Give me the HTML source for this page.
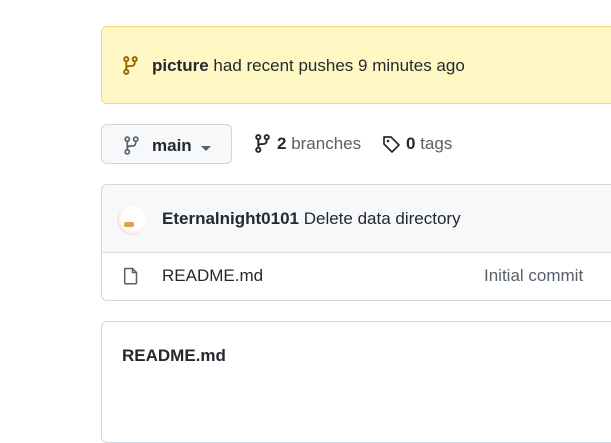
<!DOCTYPE html>
<html><head><style>
body{margin:0;width:611px;height:408px;overflow:hidden;background:#fff;font-family:"Liberation Sans",sans-serif;color:#24292f;font-size:17px;position:relative}
.abs{position:absolute}
svg{display:block}
</style></head><body>
<div class="abs" style="left:101px;top:26px;width:520px;height:76px;background:#fff8c5;border:1px solid #eed888;border-radius:6px;"></div>
<svg class="abs" style="left:122px;top:56px" width="17" height="19" viewBox="0 0 16 18"><g fill="none" stroke="#9a6700" stroke-width="1.8"><circle cx="4" cy="3" r="2"/><circle cx="4" cy="15" r="2"/><circle cx="12" cy="3" r="2"/><path d="M4 5v8M12 5v1.5a3 3 0 0 1-3 3H6.5a2.5 2.5 0 0 0-2.5 2.5"/></g></svg>
<div class="abs" style="left:152px;top:56px"><b>picture</b> had recent pushes 9 minutes ago</div>

<div class="abs" style="left:101px;top:124px;width:129px;height:38px;background:#f6f8fa;border:1px solid #d0d7de;border-radius:6px;"></div>
<svg class="abs" style="left:123px;top:136px" width="17" height="19" viewBox="0 0 16 18"><g fill="none" stroke="#57606a" stroke-width="1.6"><circle cx="4" cy="3" r="2"/><circle cx="4" cy="15" r="2"/><circle cx="12" cy="3" r="2"/><path d="M4 5v8M12 5v1.5a3 3 0 0 1-3 3H6.5a2.5 2.5 0 0 0-2.5 2.5"/></g></svg>
<div class="abs" style="left:152px;top:136px;font-weight:bold">main</div>
<div class="abs" style="left:201px;top:146px;width:0;height:0;border-left:5px solid transparent;border-right:5px solid transparent;border-top:5px solid #57606a"></div>

<svg class="abs" style="left:254px;top:134px" width="17" height="19" viewBox="0 0 16 18"><g fill="none" stroke="#24292f" stroke-width="1.8"><circle cx="4" cy="3" r="2"/><circle cx="4" cy="15" r="2"/><circle cx="12" cy="3" r="2"/><path d="M4 5v8M12 5v1.5a3 3 0 0 1-3 3H6.5a2.5 2.5 0 0 0-2.5 2.5"/></g></svg>
<div class="abs" style="left:277px;top:134px;color:#57606a"><b style="color:#24292f">2</b> branches</div>
<svg class="abs" style="left:382px;top:135px" width="19" height="19" viewBox="0 0 19 19"><path d="M2 2h7l8 8-7 7-8-8z" fill="none" stroke="#24292f" stroke-width="1.7" stroke-linejoin="round"/><circle cx="6" cy="6" r="1.3" fill="#24292f"/></svg>
<div class="abs" style="left:406px;top:134px;color:#57606a"><b style="color:#24292f">0</b> tags</div>

<div class="abs" style="left:101px;top:184px;width:520px;height:115px;border:1px solid #d0d7de;border-radius:6px;overflow:hidden">
 <div style="height:67px;background:#f6f8fa;border-bottom:1px solid #d8dee4"></div>
</div>
<div class="abs" style="left:117px;top:205px;width:30px;height:30px;border-radius:50%;background:radial-gradient(circle at 55% 45%,#fff 0 50%,#f6e4e0 70%,#e9d3cc)"></div>
<div class="abs" style="left:124px;top:222px;width:10px;height:5px;background:#e0a050;border-radius:2px"></div>
<div class="abs" style="left:162px;top:209px"><b>Eternalnight0101</b> Delete data directory</div>
<svg class="abs" style="left:123px;top:267px" width="16" height="18" viewBox="0 0 16 18"><path d="M2.5 1.5h7l4 4v10.5a.8.8 0 0 1-.8.8H2.5a.8.8 0 0 1-.8-.8V2.3a.8.8 0 0 1 .8-.8zM9.5 1.5v4h4" fill="none" stroke="#57606a" stroke-width="1.5" stroke-linejoin="round"/></svg>
<div class="abs" style="left:162px;top:266px">README.md</div>
<div class="abs" style="left:484px;top:266px;color:#57606a">Initial commit</div>

<div class="abs" style="left:101px;top:321px;width:520px;height:120px;border:1px solid #d0d7de;border-radius:6px"></div>
<div class="abs" style="left:122px;top:346px;font-weight:bold">README.md</div>
</body></html>
